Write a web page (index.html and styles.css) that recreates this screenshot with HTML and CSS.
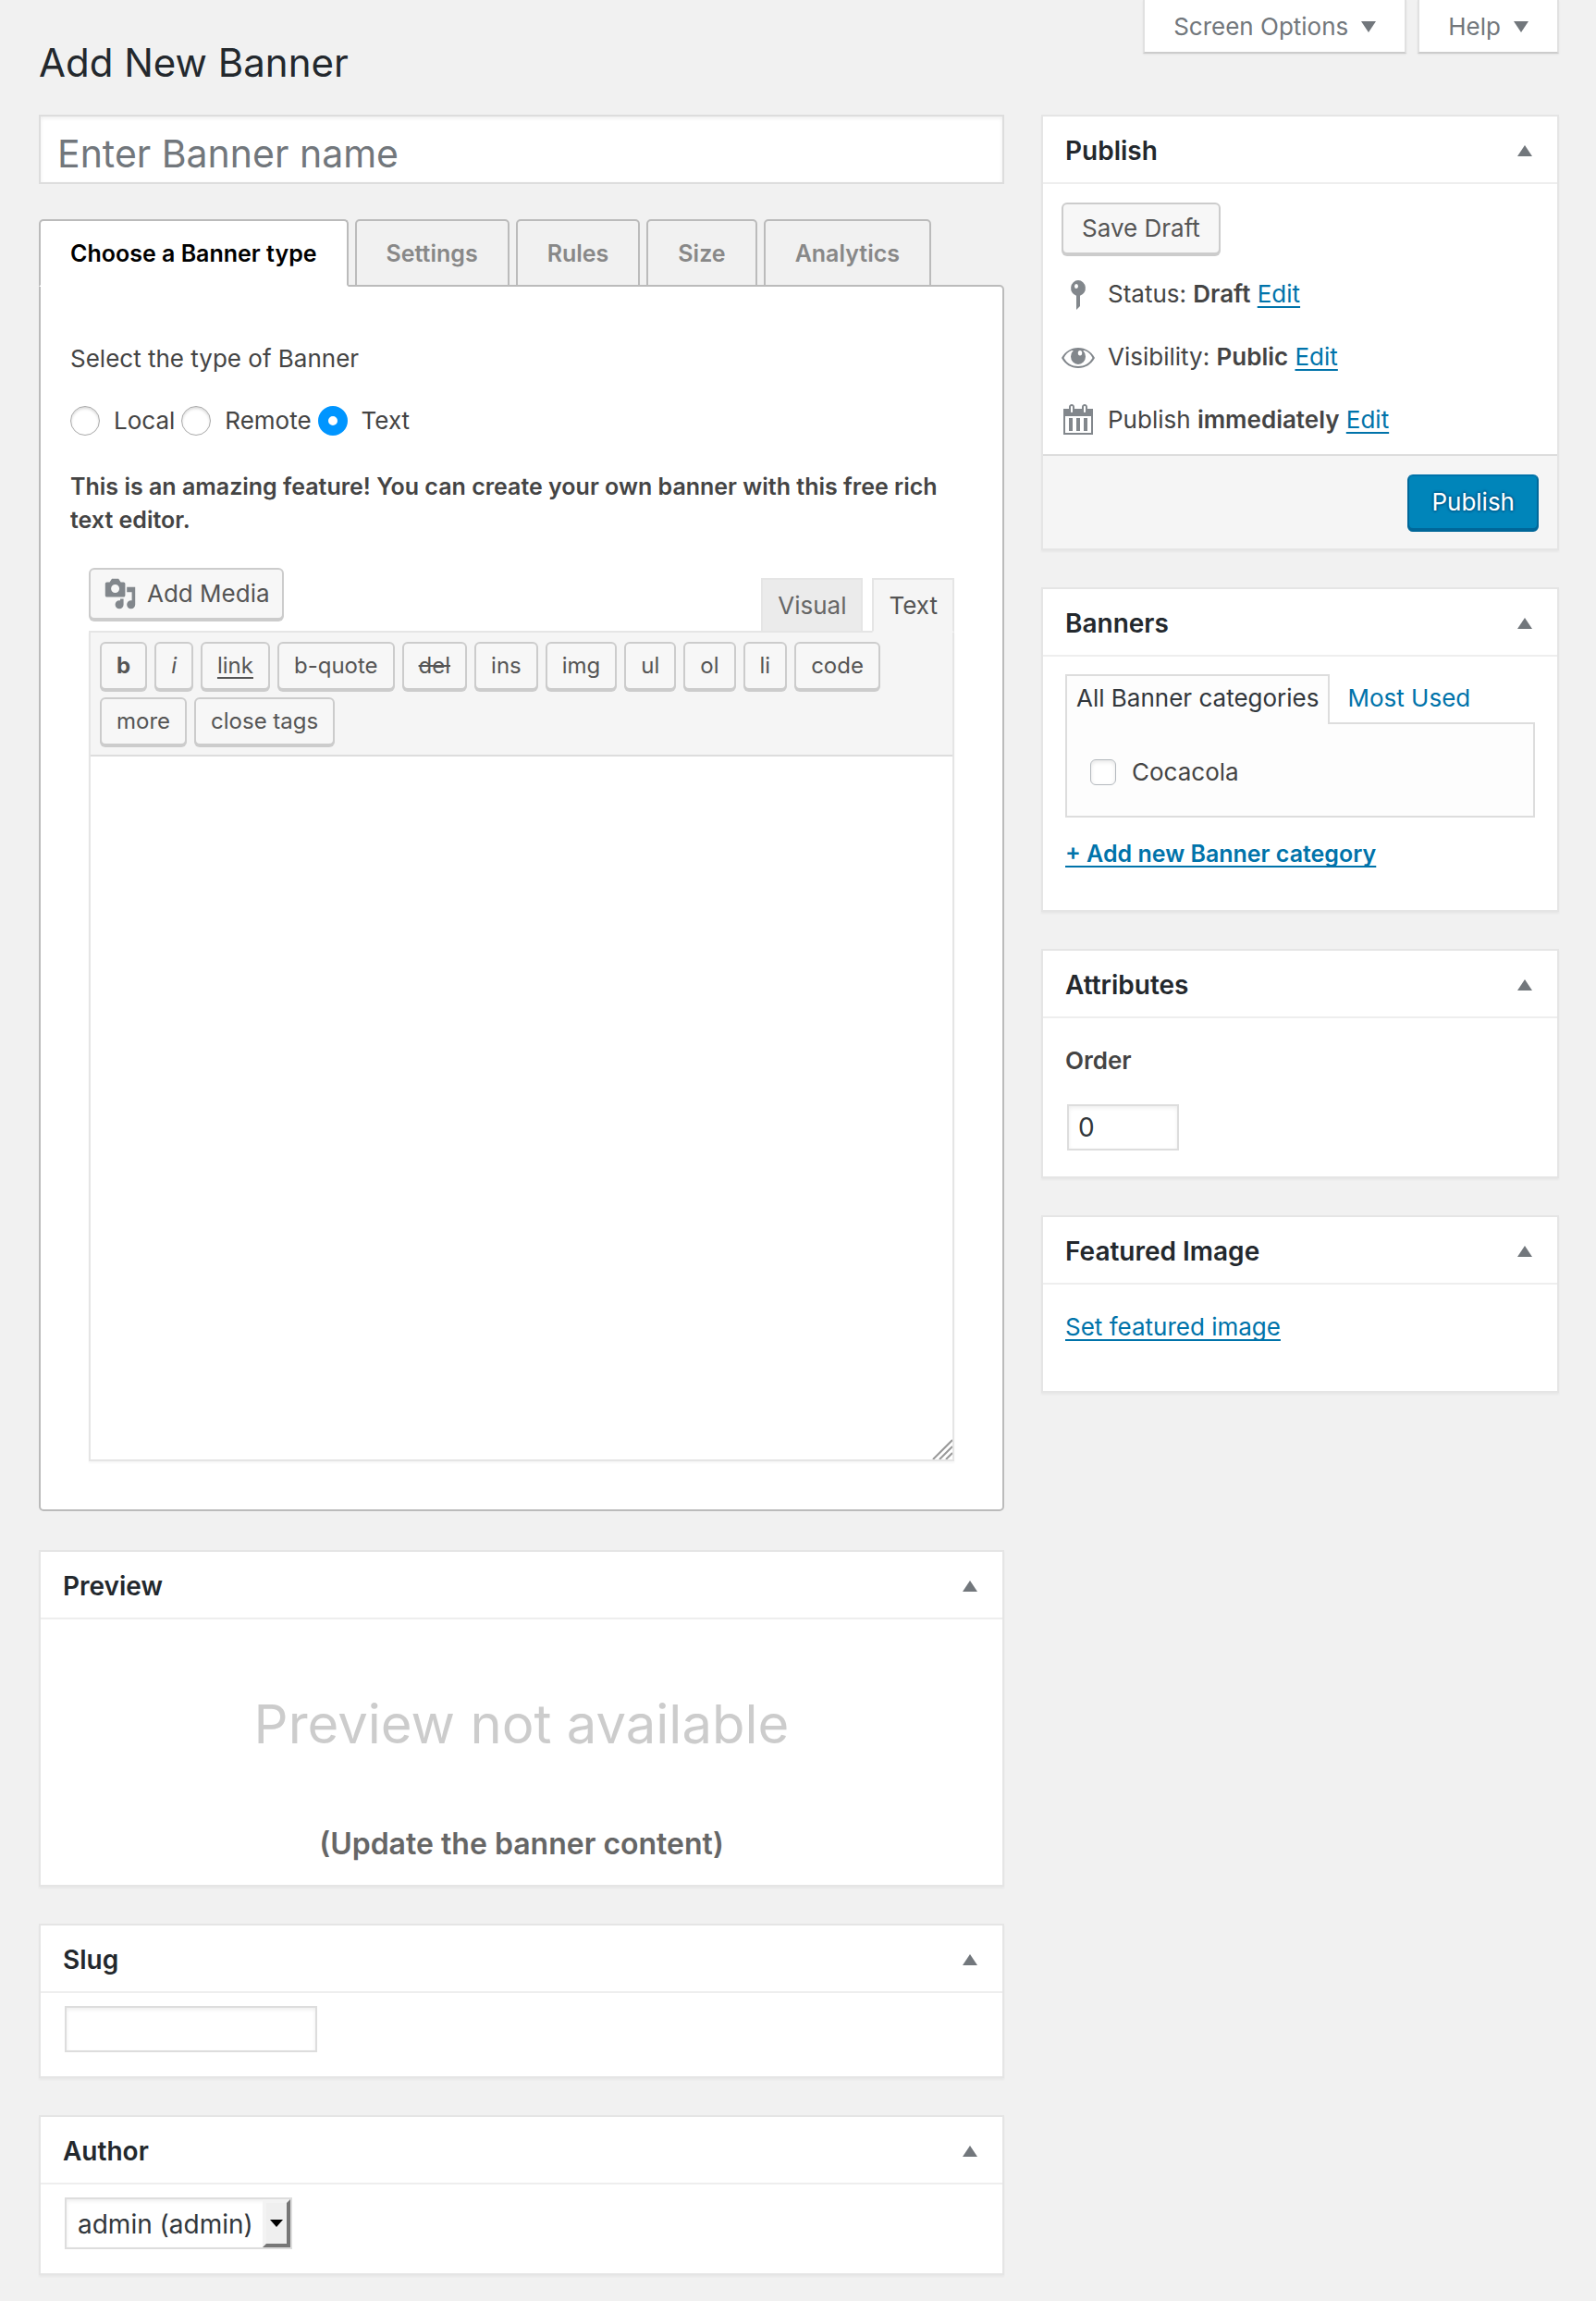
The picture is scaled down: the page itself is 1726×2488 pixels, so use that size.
FILE: index.html
```html
<!DOCTYPE html>
<html lang="en">
<head>
<meta charset="utf-8">
<meta name="viewport" content="width=device-width, initial-scale=1">
<title>Add New Banner</title>
<link rel="stylesheet" href="styles.css">
</head>
<body>
<header class="page-head">
  <h1 class="page-title">Add New Banner</h1>
  <div class="screen-links">
    <button type="button" class="screen-link">Screen Options <svg class="tri" viewBox="0 0 16 12" aria-hidden="true"><path d="M0 0h16L8 12z"/></svg></button>
    <button type="button" class="screen-link">Help <svg class="tri" viewBox="0 0 16 12" aria-hidden="true"><path d="M0 0h16L8 12z"/></svg></button>
  </div>
</header>

<div class="columns">
  <main class="main-col">
    <input class="field title-input" type="text" placeholder="Enter Banner name" aria-label="Banner name">

    <section class="tabbed">
      <div class="tabs" role="tablist">
        <button type="button" class="tab tab-active" role="tab" aria-selected="true">Choose a Banner type</button>
        <button type="button" class="tab" role="tab">Settings</button>
        <button type="button" class="tab" role="tab">Rules</button>
        <button type="button" class="tab" role="tab">Size</button>
        <button type="button" class="tab" role="tab">Analytics</button>
      </div>
      <div class="panel">
        <p class="panel-text">Select the type of Banner</p>
        <div class="radios">
          <label class="choice"><input class="radio" type="radio" name="type">Local</label>
          <label class="choice"><input class="radio" type="radio" name="type">Remote</label>
          <label class="choice"><input class="radio" type="radio" name="type" checked>Text</label>
        </div>
        <p class="panel-note">This is an amazing feature! You can create your own banner with this free rich text editor.</p>

        <div class="editor">
          <div class="editor-top">
            <button type="button" class="button media-button">
              <svg class="media-icon" viewBox="0 0 20 20" aria-hidden="true"><path d="M13 11V4c0-.55-.45-1-1-1h-1.670L9 1H5L3.670 3H2c-.55 0-1 .45-1 1v7c0 .55.45 1 1 1h10c.55 0 1-.45 1-1zM7 4.500c1.380 0 2.500 1.120 2.500 2.500S8.380 9.500 7 9.500 4.500 8.380 4.500 7 5.620 4.500 7 4.500zM14 6h5v10.500c0 1.380-1.120 2.500-2.500 2.500S14 17.880 14 16.500s1.120-2.500 2.500-2.500c.17 0 .34.02.5.05V9h-3V6zm-4 8.050V13h2v3.500c0 1.380-1.120 2.500-2.500 2.500S7 17.880 7 16.500 8.120 14 9.500 14c.17 0 .34.02.5.05z"/></svg>
              Add Media
            </button>
            <div class="modes">
              <button type="button" class="mode">Visual</button>
              <button type="button" class="mode mode-active">Text</button>
            </div>
          </div>
          <div class="editor-box">
            <div class="toolbar">
              <button type="button" class="button tool tool-b">b</button>
              <button type="button" class="button tool tool-i">i</button>
              <button type="button" class="button tool tool-link">link</button>
              <button type="button" class="button tool">b-quote</button>
              <button type="button" class="button tool tool-del">del</button>
              <button type="button" class="button tool">ins</button>
              <button type="button" class="button tool">img</button>
              <button type="button" class="button tool">ul</button>
              <button type="button" class="button tool">ol</button>
              <button type="button" class="button tool">li</button>
              <button type="button" class="button tool">code</button>
              <button type="button" class="button tool">more</button>
              <button type="button" class="button tool">close tags</button>
            </div>
            <textarea class="editor-area" rows="20" aria-label="Banner content"></textarea>
            <svg class="grip" viewBox="0 0 22 22" aria-hidden="true"><path d="M1 22 22 1M8 22 22 8M15 22l7-7"/></svg>
          </div>
        </div>
      </div>
    </section>

    <section class="box">
      <h2 class="box-head">Preview <svg class="tri" viewBox="0 0 16 12" aria-hidden="true"><path d="M0 12h16L8 0z"/></svg></h2>
      <div class="preview">
        <p class="preview-big">Preview not available</p>
        <p class="preview-small">(Update the banner content)</p>
      </div>
    </section>

    <section class="box">
      <h2 class="box-head">Slug <svg class="tri" viewBox="0 0 16 12" aria-hidden="true"><path d="M0 12h16L8 0z"/></svg></h2>
      <div class="box-form">
        <input class="field slug-input" type="text" aria-label="Slug">
      </div>
    </section>

    <section class="box">
      <h2 class="box-head">Author <svg class="tri" viewBox="0 0 16 12" aria-hidden="true"><path d="M0 12h16L8 0z"/></svg></h2>
      <div class="box-form">
        <span class="select-wrap">
          <select class="field author-select" aria-label="Author"><option>admin (admin)</option></select>
          <span class="select-arrow"><svg class="select-tri" viewBox="0 0 14 8" aria-hidden="true"><path d="M0 0h14L7 8z"/></svg></span>
        </span>
      </div>
    </section>
  </main>

  <aside class="side-col">
    <section class="box">
      <h2 class="box-head">Publish <svg class="tri" viewBox="0 0 16 12" aria-hidden="true"><path d="M0 12h16L8 0z"/></svg></h2>
      <div class="publish-body">
        <button type="button" class="button save-button">Save Draft</button>
        <ul class="publish-list">
          <li class="publish-row">
            <svg class="row-icon" viewBox="0 0 40 40" aria-hidden="true"><path fill-rule="evenodd" d="M20 5a8 8.500 0 0 1 2 16.700V33l-4 4V21.700A8 8.500 0 0 1 20 5zm-2 4a2 2.500 0 1 0 0 5 2 2.500 0 0 0 0-5z"/></svg>
            <span>Status: <b>Draft</b> <a class="link" href="#status">Edit</a></span>
          </li>
          <li class="publish-row">
            <svg class="row-icon" viewBox="0 0 40 40" aria-hidden="true"><path fill-rule="evenodd" d="M20 10c8 0 14 4 18 11-4 7-10 11-18 11S6 28 2 21c4-7 10-11 18-11zm-7 3c-4 1.500-6.500 4-8.500 8C8 27 13 30 20 30s12-3 15.500-9c-2-4-4.500-6.500-8.500-8z"/><path fill-rule="evenodd" d="M20 11a8 8.500 0 1 1 0 17 8 8.500 0 0 1 0-17zm2 2a2 2.500 0 1 0 0 5.500 2 2.500 0 0 0 0-5.500z"/></svg>
            <span>Visibility: <b>Public</b> <a class="link" href="#visibility">Edit</a></span>
          </li>
          <li class="publish-row">
            <svg class="row-icon" viewBox="0 0 20 20" aria-hidden="true"><path d="M15 4h3v14H2V4h3V3c0-.83.67-1.500 1.500-1.500S8 2.170 8 3v1h4V3c0-.83.67-1.500 1.500-1.500S15 2.170 15 3v1zM6 3v2.500c0 .28.22.5.5.5s.5-.22.5-.5V3c0-.28-.22-.5-.5-.5S6 2.720 6 3zm7 0v2.500c0 .28.22.5.5.5s.5-.22.5-.5V3c0-.28-.22-.5-.5-.5s-.5.22-.5.5zm4 14V8H3v9h14zM7 16V9H5v7h2zm4 0V9H9v7h2zm4 0V9h-2v7h2z"/></svg>
            <span>Publish <b>immediately</b> <a class="link" href="#date">Edit</a></span>
          </li>
        </ul>
      </div>
      <div class="publish-foot">
        <button type="submit" class="button-primary">Publish</button>
      </div>
    </section>

    <section class="box">
      <h2 class="box-head">Banners <svg class="tri" viewBox="0 0 16 12" aria-hidden="true"><path d="M0 12h16L8 0z"/></svg></h2>
      <div class="cats">
        <div class="cat-tabs">
          <a class="cat-tab cat-tab-active" href="#all">All Banner categories</a>
          <a class="cat-tab" href="#used">Most Used</a>
        </div>
        <div class="cat-list">
          <label class="cat-item"><input class="check" type="checkbox">Cocacola</label>
        </div>
        <a class="link cat-add" href="#add">+ Add new Banner category</a>
      </div>
    </section>

    <section class="box">
      <h2 class="box-head">Attributes <svg class="tri" viewBox="0 0 16 12" aria-hidden="true"><path d="M0 12h16L8 0z"/></svg></h2>
      <div class="attrs">
        <label class="attr-label" for="order">Order</label>
        <input class="field order-input" id="order" type="text" value="0">
      </div>
    </section>

    <section class="box">
      <h2 class="box-head">Featured Image <svg class="tri" viewBox="0 0 16 12" aria-hidden="true"><path d="M0 12h16L8 0z"/></svg></h2>
      <div class="featured"><a class="link" href="#image">Set featured image</a></div>
    </section>
  </aside>
</div>
</body>
</html>
```

FILE: styles.css
```css
*, *::before, *::after { box-sizing: border-box; }

body {
  margin: 0;
  padding: 0 40px 28px 42px;
  background: #f1f1f1;
  color: #444;
  font: 400 26px/36px Inter, "Liberation Sans", sans-serif;
}
h1, h2, p, ul { margin: 0; padding: 0; font-weight: inherit; }
ul { list-style: none; }
button, input, select, textarea { font: inherit; color: inherit; margin: 0; }
button { cursor: pointer; white-space: nowrap; }
b { font-weight: 600; }

.page-head { display: flex; justify-content: space-between; align-items: flex-start; margin-bottom: 26px; }
.page-title { padding-top: 38px; font-size: 42px; line-height: 60px; color: #23282d; }
.screen-links { display: flex; gap: 12px; }
.screen-link {
  display: flex; align-items: center; gap: 14px;
  height: 58px; padding: 2px 31px 0;
  border: 2px solid #e1e1e1; border-top: 0; border-bottom-color: #ccc;
  background: #fff; color: #72777c;
  box-shadow: 0 1px 2px rgba(0, 0, 0, .06);
}
.tri { width: 16px; height: 12px; fill: #72777c; }

.columns { display: grid; grid-template-columns: minmax(0, 1fr) 560px; gap: 40px; align-items: start; }
.main-col, .side-col { display: grid; gap: 40px; min-width: 0; }

.field {
  border: 2px solid #ddd; border-radius: 0; outline: 0;
  background: #fff; color: #32373c;
  box-shadow: inset 0 2px 4px rgba(0, 0, 0, .07);
}
.title-input { width: 100%; height: 75px; padding: 8px 18px 0; font-size: 41px; line-height: 60px; }
.title-input::placeholder { color: #72777c; opacity: 1; }

.tabbed { margin: -2px 0 2px; }
.tabs { display: flex; gap: 7px; position: relative; }
.tab {
  margin-bottom: -2px; height: 73px; padding: 0 32px;
  border: 2px solid #bbb; border-radius: 5px 5px 0 0;
  background: #f1f1f1; color: #888; font-size: 25px; font-weight: 600;
}
.tab-active { border-bottom-color: #fff; background: #fff; color: #000; }
.panel { padding: 60px 32px 52px; border: 2px solid #bbb; border-radius: 0 5px 5px 5px; background: #fff; }
.radios { display: flex; gap: 7px; margin: 31px 0 35px; }
.choice { display: flex; align-items: center; gap: 15px; }
.radio {
  appearance: none; width: 32px; height: 32px;
  border: 1px solid #aaa; border-radius: 50%; background: #fff;
  box-shadow: inset 0 2px 3px rgba(0, 0, 0, .15);
}
.radio:checked { border: 11px solid #0095ff; box-shadow: none; }
.panel-note { font-size: 25px; font-weight: 600; }

.button {
  border: 2px solid #ccc; border-radius: 6px;
  background: #f7f7f7; color: #555;
  box-shadow: 0 2px 0 #ccc;
}
.editor { margin: 34px 20px 0; }
.editor-top { display: flex; justify-content: space-between; align-items: flex-start; height: 68px; }
.media-button { display: flex; align-items: center; gap: 11px; height: 56px; padding: 0 13px 0 14px; }
.media-icon { width: 36px; height: 36px; fill: #82878c; }
.modes { display: flex; gap: 10px; align-self: flex-end; margin-bottom: -2px; position: relative; z-index: 1; }
.mode { height: 59px; padding: 0 16px; border: 2px solid #e5e5e5; background: #ebebeb; color: #666; }
.mode-active { border-bottom-color: #f5f5f5; background: #f5f5f5; color: #555; }
.editor-box { position: relative; border: 2px solid #e5e5e5; box-shadow: 0 2px 2px rgba(0, 0, 0, .04); }
.toolbar { display: flex; flex-wrap: wrap; gap: 8px; padding: 10px; border-bottom: 2px solid #ddd; background: #f5f5f5; }
.tool { height: 52px; padding: 0 16px; font-size: 24px; }
.tool-b { font-weight: 700; }
.tool-i { font-style: italic; }
.tool-link { text-decoration: underline; text-underline-offset: 4px; }
.tool-del { text-decoration: line-through; }
.editor-area { display: block; width: 100%; height: 760px; padding: 20px; border: 0; outline: 0; resize: none; background: #fff; }
.grip { position: absolute; right: 0; bottom: 0; width: 22px; height: 22px; fill: none; stroke: #999; stroke-width: 2; }

.box { border: 2px solid #e5e5e5; background: #fff; box-shadow: 0 2px 2px rgba(0, 0, 0, .04); }
.box-head {
  display: flex; align-items: center; justify-content: space-between;
  padding: 19px 27px 16px 24px; border-bottom: 2px solid #eee;
  font-size: 28px; font-weight: 600; color: #23282d;
}
.preview { padding: 77px 24px 24px; text-align: center; }
.preview-big { font-size: 58px; line-height: 72px; color: #ccc; }
.preview-small { margin-top: 74px; font-size: 32px; line-height: 40px; font-weight: 600; color: #666; }
.box-form { padding: 14px 26px 26px; }
.slug-input { display: block; width: 273px; height: 50px; padding: 0 10px; font-size: 28px; }
.select-wrap { display: flex; position: relative; width: 246px; }
.author-select { appearance: none; width: 100%; height: 56px; padding: 2px 12px 0; font-size: 28px; }
.select-arrow {
  position: absolute; top: 2px; right: 2px; bottom: 2px; width: 30px;
  display: flex; align-items: center; justify-content: center;
  border: 4px solid; border-color: #f3f3f3 #777 #777 #f3f3f3; background: #efefef;
  pointer-events: none;
}
.select-tri { width: 14px; height: 8px; fill: #000; }

.publish-body { padding: 20px 20px 3px; }
.save-button { display: block; height: 56px; padding: 0 20px; }
.publish-list { margin-top: 9px; }
.publish-row { display: flex; align-items: center; gap: 12px; height: 68px; }
.row-icon { width: 40px; height: 40px; margin-left: -2px; fill: #82878c; }
.link { color: #0073aa; text-decoration: underline 2px; text-underline-offset: 4px; text-decoration-skip-ink: none; }
.publish-foot { display: flex; justify-content: flex-end; padding: 20px; border-top: 2px solid #ddd; background: #f5f5f5; }
.button-primary {
  height: 60px; padding: 0 24px;
  border: 2px solid #006799; border-top-color: #0073aa; border-radius: 6px;
  background: #0085ba; color: #fff;
  box-shadow: 0 2px 0 #006799; text-shadow: 0 -2px 2px #006799, 2px 0 2px #006799, 0 2px 2px #006799, -2px 0 2px #006799;
}

.cats { padding: 19px 24px 43px; }
.cat-tabs { display: flex; gap: 7px; }
.cat-tab { padding: 6px 10px 8px; border: 2px solid transparent; border-bottom: 0; color: #0073aa; text-decoration: none; }
.cat-tab-active { position: relative; margin-bottom: -2px; border-color: #ddd; background: #fdfdfd; color: #32373c; }
.cat-list { padding: 34px 25px 29px; border: 2px solid #ddd; background: #fdfdfd; }
.cat-item { display: flex; align-items: center; gap: 17px; }
.check {
  appearance: none; width: 28px; height: 28px;
  border: 1px solid #b4b9be; border-radius: 6px; background: #fff;
  box-shadow: inset 0 2px 4px rgba(0, 0, 0, .1);
}
.cat-add { display: block; margin-top: 21px; font-size: 25px; font-weight: 600; }

.attrs { padding: 28px 24px; }
.attr-label { display: block; margin-bottom: 29px; font-weight: 600; }
.order-input { display: block; width: 121px; height: 50px; margin-left: 2px; padding: 0 10px; font-size: 28px; }
.featured { padding: 28px 24px 51px; }
```
